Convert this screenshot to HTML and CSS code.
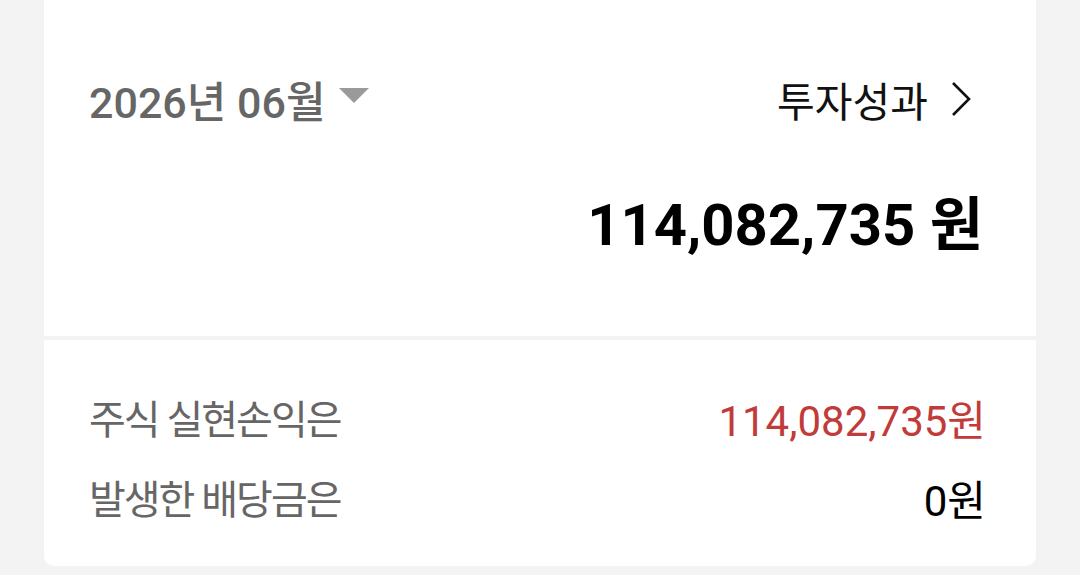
FILE: index.html
```html
<!DOCTYPE html>
<html lang="ko">
<head>
<meta charset="utf-8">
<link rel="stylesheet" href="styles.css">
</head>
<body>
<div class="card">
  <section class="top">
    <div class="header">
      <button class="month">
        <span class="month-text">2026년 06월</span>
        <svg class="caret" width="30" height="16" viewBox="0 0 30 16"><polygon points="0,0 30,0 15,15" fill="#9a9a9a"/></svg>
      </button>
      <a class="perf">
        <span>투자성과</span>
        <svg class="chev" width="22" height="36" viewBox="0 0 22 36"><polyline points="3,2 19,18 3,34" fill="none" stroke="#111" stroke-width="2.6"/></svg>
      </a>
    </div>
    <div class="total">114,082,735 원</div>
  </section>
  <section class="bottom">
    <div class="row">
      <span class="label">주식 실현손익은</span>
      <span class="value red">114,082,735원</span>
    </div>
    <div class="row">
      <span class="label">발생한 배당금은</span>
      <span class="value">0원</span>
    </div>
  </section>
</div>
</body>
</html>
```
FILE: styles.css
```css
html, body {
  margin: 0;
  padding: 0;
  background: #f3f3f3;
  font-family: Roboto, "Noto Sans CJK KR", sans-serif;
}
.card {
  width: 992px;
  margin: 0 0 0 44px;
  display: flex;
  flex-direction: column;
  gap: 4px;
}
.top {
  background: #fff;
  height: 336px;
  box-sizing: border-box;
  padding: 74px 64px 0 45px;
}
.header {
  display: flex;
  justify-content: space-between;
  align-items: center;
  height: 50px;
}
.month {
  border: 0;
  background: none;
  padding: 0;
  display: flex;
  align-items: center;
  gap: 14px;
  font: inherit;
}
.month-text {
  font-size: 43px;
  font-weight: 500;
  color: #666;
}
.caret { margin-top: -6px; }
.perf {
  display: flex;
  align-items: center;
  gap: 22px;
  font-size: 41px;
  color: #111;
}
.total {
  margin-top: 72px;
  margin-right: -11px;
  text-align: right;
  font-size: 58px;
  font-weight: 700;
  color: #000;
  line-height: 1;
}
.bottom {
  background: #fff;
  height: 226px;
  border-radius: 0 0 10px 10px;
  box-sizing: border-box;
  padding: 52px 50px 0 45px;
  display: flex;
  flex-direction: column;
  gap: 30px;
}
.row {
  display: flex;
  justify-content: space-between;
  align-items: center;
  height: 50px;
}
.label {
  font-size: 40px;
  color: #666;
  letter-spacing: -2px;
}
.value {
  font-size: 42px;
  color: #000;
}
.red { color: #c23b3b; }
```
